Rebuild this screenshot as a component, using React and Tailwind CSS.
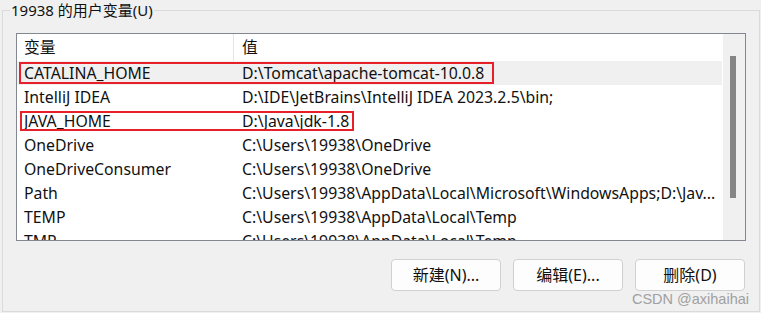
import React from "react";

const rows = [
  ["CATALINA_HOME", "D:\\Tomcat\\apache-tomcat-10.0.8"],
  ["IntelliJ IDEA", "D:\\IDE\\JetBrains\\IntelliJ IDEA 2023.2.5\\bin;"],
  ["JAVA_HOME", "D:\\Java\\jdk-1.8"],
  ["OneDrive", "C:\\Users\\19938\\OneDrive"],
  ["OneDriveConsumer", "C:\\Users\\19938\\OneDrive"],
  ["Path", "C:\\Users\\19938\\AppData\\Local\\Microsoft\\WindowsApps;D:\\Jav..."],
  ["TEMP", "C:\\Users\\19938\\AppData\\Local\\Temp"],
  ["TMP", "C:\\Users\\19938\\AppData\\Local\\Temp"],
];

export default function App() {
  return (
    <div className="w-[761px] h-[313px] bg-[#f0f0f0] pt-[10px] pl-[2px] text-[15.8px] text-[#111] overflow-hidden font-['Noto_Sans','Noto_Sans_CJK_SC',sans-serif]">
      <div className="relative w-[758px] h-[302px] border border-[#dadada] pt-[22px] pl-[13px] pr-[13px]">
        <span className="absolute left-[7px] top-[-12px] bg-[#f0f0f0] px-[1px] leading-[22px] text-[15px]">
          19938 的用户变量(U)
        </span>

        {/* list box */}
        <div className="flex w-[730px] h-[208px] border border-[#828790] bg-white">
          <div className="relative w-[705px] h-full overflow-hidden">
            <div className="flex h-[27px] items-center">
              <div className="w-[217px] h-full flex items-center pl-[7px] pt-[1px] border-r border-[#e5e5e5]">变量</div>
              <div className="pl-[8px] pt-[1px]">值</div>
            </div>
            {rows.map(([k, v], i) => (
              <div
                key={k}
                className={`flex h-[24px] items-center pt-[1px] whitespace-nowrap ${i === 0 ? "bg-[#f0f0f0]" : "bg-white"}`}
              >
                <div className="w-[218px] pl-[7px]">{k}</div>
                <div className="pl-[7px]">{v}</div>
              </div>
            ))}
            {/* red annotation boxes */}
            <div className="absolute left-[2px] top-[28px] w-[475px] h-[22px] border-2 border-[#e8202a]" />
            <div className="absolute left-[3px] top-[77px] w-[334px] h-[20px] border-2 border-[#e8202a]" />
          </div>
          <div className="relative w-[23px] h-full bg-[#f0f0f0] border-l border-white">
            <div className="absolute left-[7px] top-[22px] w-[6px] h-[142px] bg-[#858585]" />
          </div>
        </div>

        {/* buttons */}
        <div className="flex justify-end gap-3 mt-[18px] pr-[1px]">
          {["新建(N)...", "编辑(E)...", "删除(D)"].map((t) => (
            <button
              key={t}
              className="w-[110px] h-[32px] rounded-[4px] border border-[#d0d0d0] bg-[#fdfdfd] text-[16px] text-[#111] flex items-center justify-center"
            >
              {t}
            </button>
          ))}
        </div>

        <span className="absolute right-[10px] bottom-[5px] text-[14.5px] text-[#a0a0a0] font-['Liberation_Sans',Arial,sans-serif] leading-none">
          CSDN @axihaihai
        </span>
      </div>
    </div>
  );
}
